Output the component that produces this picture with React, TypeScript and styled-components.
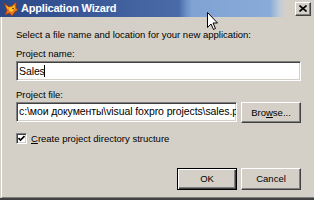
import React from "react";
import styled, { createGlobalStyle } from "styled-components";

const Global = createGlobalStyle`
  html, body { margin: 0; padding: 0; background: #d4d0c8; }
  body { font-family: "Liberation Sans", Arial, sans-serif; }
`;

const Window = styled.div`
  position: relative;
  width: 314px;
  height: 200px;
  box-sizing: border-box;
  background: #d4d0c8;
  display: flex;
  flex-direction: column;
  overflow: hidden;
  border-bottom: 2px solid #404040;
`;

const TitleBar = styled.div`
  height: 17px;
  flex: none;
  display: flex;
  align-items: center;
  gap: 2px;
  padding: 0 3px 0 3px;
  background: linear-gradient(
    90deg,
    #2a4788 0%,
    #4b6ba8 57%,
    #6f92c8 59.5%,
    #7fa2d3 61%,
    #88abd9 86%,
    #c0cbd8 89%,
    #d4d0c8 91%,
    #d4d0c8 100%
  );
`;

const TitleText = styled.span`
  flex: 1;
  color: #fff;
  font-weight: bold;
  font-size: 11px;
  letter-spacing: -0.2px;
  line-height: 17px;
  white-space: nowrap;
`;

const raised = `
  background: #d4d0c8;
  border-style: solid;
  border-width: 1px;
  border-color: #fff #404040 #404040 #fff;
  box-shadow: inset -1px -1px 0 #808080, inset 1px 1px 0 #d4d0c8;
`;

const CloseButton = styled.div`
  width: 16px;
  height: 14px;
  box-sizing: border-box;
  ${raised}
  display: flex;
  align-items: center;
  justify-content: center;
`;

const Body = styled.div`
  flex: 1;
  display: flex;
  flex-direction: column;
  margin-left: 1px;
  border-left: 1px solid #fff;
  border-bottom: 1px solid #808080;
  padding: 12px 13px 0 14px;
  font-size: 9.5px;
  color: #000;
`;

const Text = styled.div<{ $gap?: number }>`
  line-height: 12px;
  height: 12px;
  margin-top: ${(p) => p.$gap ?? 0}px;
  white-space: nowrap;
`;

const Field = styled.div<{ $gap?: number; $shift?: number }>`
  box-sizing: border-box;
  height: 20px;
  margin-top: ${(p) => p.$gap ?? 0}px;
  background: #fff;
  border-style: solid;
  border-width: 1px;
  border-color: #808080 #fff #fff #808080;
  box-shadow: inset 1px 1px 0 #404040, inset -1px -1px 0 #d4d0c8;
  padding: 0 2px 0 2px;
  display: flex;
  align-items: center;
  overflow: hidden;
  white-space: nowrap;
  line-height: 13px;
  font-size: 10.5px;
  letter-spacing: -0.1px;
  & > span {
    position: relative;
    top: ${(p) => p.$shift ?? 0}px;
  }
`;

const Caret = styled.span`
  display: inline-block;
  width: 1px;
  height: 12px;
  background: #000;
  vertical-align: -2px;
  margin-left: -1px;
`;

const FileRow = styled.div`
  display: flex;
  gap: 4px;
  margin-top: 1px;
  align-items: flex-start;
  & > ${Field} {
    flex: 1;
    min-width: 0;
  }
`;

const Button = styled.div<{ $default?: boolean; $h?: number }>`
  box-sizing: border-box;
  width: 60px;
  height: ${(p) => p.$h ?? 21}px;
  flex: none;
  display: flex;
  align-items: center;
  justify-content: center;
  font-size: 9.5px;
  line-height: 12px;
  ${raised}
  ${(p) =>
    p.$default
      ? `
    border-color: #000;
    box-shadow: inset 1px 1px 0 #fff, inset -1px -1px 0 #404040, inset -2px -2px 0 #808080;
  `
      : ""}
`;

const CheckRow = styled.div`
  display: flex;
  align-items: flex-start;
  gap: 4px;
  margin-top: 10px;
  height: 12px;
`;

const CheckBox = styled.div`
  box-sizing: border-box;
  width: 11px;
  height: 11px;
  background: #fff;
  border-style: solid;
  border-width: 1px;
  border-color: #808080 #fff #fff #808080;
  box-shadow: inset 1px 1px 0 #404040, inset -1px -1px 0 #d4d0c8;
  display: flex;
  align-items: center;
  justify-content: center;
`;

const ButtonRow = styled.div`
  display: flex;
  justify-content: flex-end;
  align-items: flex-start;
  gap: 4px;
  margin-top: 23px;
`;

const U = styled.span`
  text-decoration: underline;
  text-underline-offset: 1px;
`;

const Cursor = styled.svg`
  position: absolute;
  left: 207px;
  top: 12px;
  pointer-events: none;
`;

const FoxIcon = () => (
  <svg width="16" height="16" viewBox="0 0 16 16">
    <path
      d="M1 2 L5 5.5 L9 5 L13 1 L13 7 L15 9 L12 11 L9 15 L6.5 12 L2 14 L4 9.5 Z"
      fill="#e8761a"
      stroke="#a03a08"
      strokeWidth="0.8"
      strokeLinejoin="round"
    />
    <path d="M5 6.5 L9 6 L11.5 4 L11.5 8 L9 11 L6.5 10 Z" fill="#fbc52a" />
    <path d="M3 4 L5 6 L4.5 8 Z" fill="#fbd54a" />
    <circle cx="10" cy="7.5" r="0.8" fill="#5a1a00" />
  </svg>
);

export default function App() {
  return (
    <>
      <Global />
      <Window>
        <TitleBar>
          <FoxIcon />
          <TitleText>Application Wizard</TitleText>
          <CloseButton>
            <svg width="8" height="7" viewBox="0 0 8 7">
              <path d="M0.5 0.5 L7.5 6.5 M7.5 0.5 L0.5 6.5" stroke="#000" strokeWidth="1.6" />
            </svg>
          </CloseButton>
        </TitleBar>
        <Body>
          <Text>Select a file name and location for your new application:</Text>
          <Text $gap={7}>Project name:</Text>
          <Field $gap={1}>
            <span>
              Sales
              <Caret />
            </span>
          </Field>
          <Text $gap={8}>Project file:</Text>
          <FileRow>
            <Field $shift={-1}>
              <span>c:\мои документы\visual foxpro projects\sales.pjx</span>
            </Field>
            <Button>
              <span>
                Bro<U>w</U>se...
              </span>
            </Button>
          </FileRow>
          <CheckRow>
            <CheckBox>
              <svg width="7" height="7" viewBox="0 0 7 7">
                <path d="M0.5 3 L2.5 5 L6.5 1" stroke="#000" strokeWidth="1.6" fill="none" />
              </svg>
            </CheckBox>
            <Text>
              <U>C</U>reate project directory structure
            </Text>
          </CheckRow>
          <ButtonRow>
            <Button $default $h={22}>OK</Button>
            <Button $h={22}>Cancel</Button>
          </ButtonRow>
        </Body>
        <Cursor width="12" height="19" viewBox="0 0 12 19">
          <path
            d="M0.5 0.5 V15.5 L4 12 L6.5 17.5 L8.5 16.5 L6 11 H10.5 Z"
            fill="#fff"
            stroke="#000"
            strokeWidth="1"
            strokeLinejoin="miter"
          />
        </Cursor>
      </Window>
    </>
  );
}
